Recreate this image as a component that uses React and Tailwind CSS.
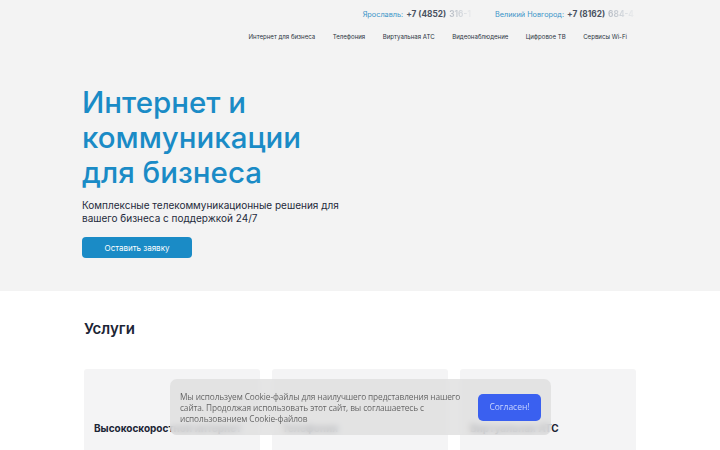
const navItems = [
  "Интернет для бизнеса",
  "Телефония",
  "Виртуальная АТС",
  "Видеонаблюдение",
  "Цифровое ТВ",
  "Сервисы Wi-Fi",
];

const services = ["Высокоскоростной интернет", "Телефония", "Виртуальная АТС"];

function Phone({ city, code, tail }) {
  return (
    <div className="flex items-center gap-[3px] text-[7.3px] leading-none">
      <span className="text-[#3a93c8]">{city}</span>
      <span className="font-bold text-[8.3px] text-[#4a5261]">+7 ({code})</span>
      <span className="font-bold text-[8.3px] bg-gradient-to-r from-[#b3b9c2] via-[#d4d8dd] to-transparent bg-clip-text text-transparent pr-1">
        {tail}
      </span>
    </div>
  );
}

export default function App() {
  return (
    <div className="min-h-[450px] bg-white font-['Inter',sans-serif] overflow-hidden relative">
      <section className="bg-[#f3f3f3] px-[82px] pb-[33px]">
        <header className="flex flex-col items-end pt-[10px]">
          <div className="flex gap-[20px] mr-0">
            <Phone city="Ярославль:" code="4852" tail="316-1" />
            <Phone city="Великий Новгород:" code="8162" tail="684-4" />
          </div>
          <nav className="flex gap-[17.5px] mt-[14px] mr-[11px] text-[6.1px] text-[#2b3442]">
            {navItems.map((item) => (
              <span key={item}>{item}</span>
            ))}
          </nav>
        </header>

        <div className="mt-[44px]">
          <h1 className="text-[29.5px] leading-[35px] font-medium text-[#1a8bc6]">
            Интернет и
            <br />
            коммуникации
            <br />
            для бизнеса
          </h1>
          <p className="mt-[9px] text-[10px] leading-[13px] text-[#1f2b3c]">
            Комплексные телекоммуникационные решения для
            <br />
            вашего бизнеса с поддержкой 24/7
          </p>
          <button className="mt-[12px] w-[110px] h-[21px] rounded-[4px] bg-[#1a8bc6] text-white text-[8px]">
            Оставить заявку
          </button>
        </div>
      </section>

      <section className="px-[84px] pt-[29px]">
        <h2 className="text-[15px] leading-[18px] font-semibold text-[#1c2535]">Услуги</h2>
        <div className="grid grid-cols-3 gap-3 mt-[31px]">
          {services.map((s) => (
            <div key={s} className="bg-[#f4f4f5] rounded-[3px] h-[120px] pt-[52px] px-[10px]">
              <h3 className="text-[10px] font-bold text-[#1c2535] whitespace-nowrap">{s}</h3>
            </div>
          ))}
        </div>
      </section>

      {/* cookie notice */}
      <div className="absolute left-[170px] top-[379px] w-[381px] h-[56px] rounded-[7px] bg-[#dedede]/80 backdrop-blur-[3px] flex items-center justify-between pl-[10px] pr-[10px] font-['Open_Sans',sans-serif]">
        <p className="text-[8.3px] leading-[11px] text-[#666666] w-[290px] tracking-[-0.1px]">
          Мы используем Cookie-файлы для наилучшего представления нашего сайта. Продолжая использовать этот сайт, вы соглашаетесь с использованием Cookie-файлов
        </p>
        <button className="w-[63px] h-[27px] rounded-[5px] bg-[#3a60f0] text-[#c9d4ff] text-[8.5px]">
          Согласен!
        </button>
      </div>
    </div>
  );
}
